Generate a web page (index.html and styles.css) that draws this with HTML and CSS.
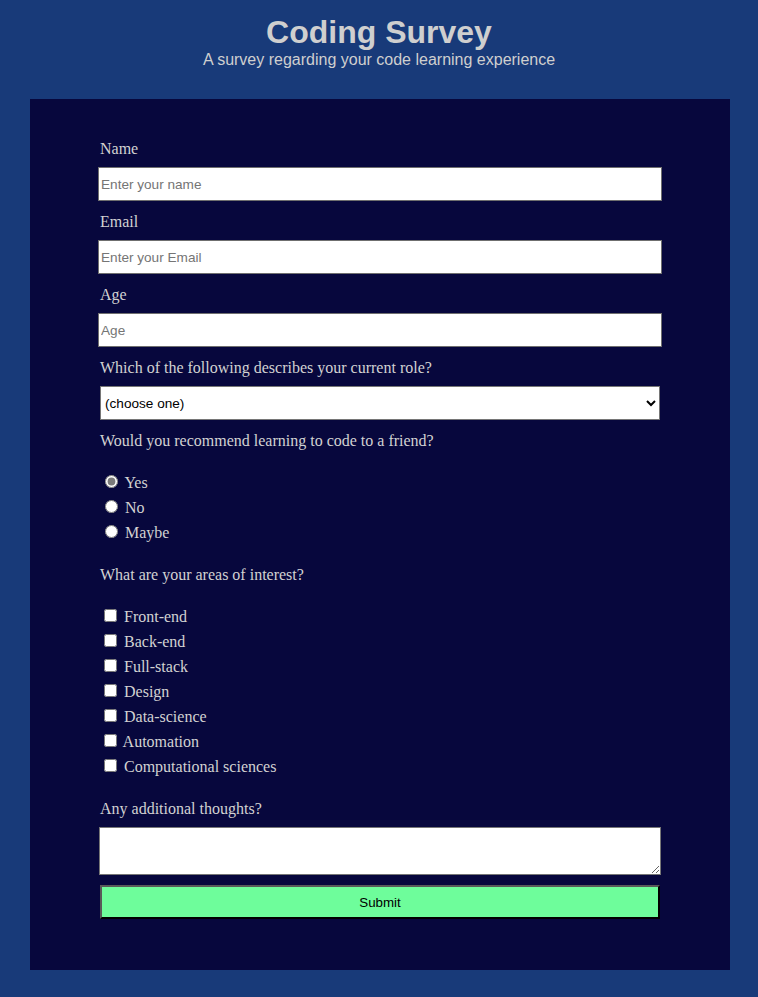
FILE: index.html
```html
<!DOCTYPE html>
<html lang="en">
<head>
<meta charset="utf-8">
<title>Coding Survey</title>
<link rel="stylesheet" href="styles.css">
</head>
<body>
<header class="header">
  <h1 class="title">Coding Survey</h1>
  <p class="subtitle">A survey regarding your code learning experience</p>
</header>
<main class="card">
  <form class="survey">
    <div class="group">
      <label class="field-label" for="name">Name</label>
      <input class="text-input" id="name" type="text" placeholder="Enter your name">
    </div>
    <div class="group">
      <label class="field-label" for="email">Email</label>
      <input class="text-input" id="email" type="email" placeholder="Enter your Email">
    </div>
    <div class="group">
      <label class="field-label" for="age">Age</label>
      <input class="text-input" id="age" type="number" placeholder="Age">
    </div>
    <div class="group">
      <label class="field-label" for="role">Which of the following describes your current role?</label>
      <select class="select" id="role">
        <option>(choose one)</option>
        <option>Student</option>
        <option>Full-time job</option>
        <option>Other</option>
      </select>
    </div>
    <div class="group">
      <p class="field-label">Would you recommend learning to code to a friend?</p>
      <div class="options">
        <label class="option"><input class="radio" type="radio" name="rec" checked> Yes</label>
        <label class="option"><input class="radio" type="radio" name="rec"> No</label>
        <label class="option"><input class="radio" type="radio" name="rec"> Maybe</label>
      </div>
    </div>
    <div class="group">
      <p class="field-label">What are your areas of interest?</p>
      <div class="options">
        <label class="option"><input class="check" type="checkbox"> Front-end</label>
        <label class="option"><input class="check" type="checkbox"> Back-end</label>
        <label class="option"><input class="check" type="checkbox"> Full-stack</label>
        <label class="option"><input class="check" type="checkbox"> Design</label>
        <label class="option"><input class="check" type="checkbox"> Data-science</label>
        <label class="option"><input class="check tight" type="checkbox"> Automation</label>
        <label class="option"><input class="check" type="checkbox"> Computational sciences</label>
      </div>
    </div>
    <div class="group last">
      <label class="field-label" for="thoughts">Any additional thoughts?</label>
      <textarea class="textarea" id="thoughts"></textarea>
    </div>
    <button class="submit" type="submit">Submit</button>
  </form>
</main>
</body>
</html>
```
FILE: styles.css
```css
html, body {
  margin: 0;
  padding: 0;
}
body {
  background: #183a79;
  color: #d2d2d2;
  font-family: "Liberation Serif", "Times New Roman", serif;
  font-size: 16px;
  padding-bottom: 27px;
}
.header {
  text-align: center;
  padding-top: 14px;
  margin-bottom: 30px;
  font-family: "Liberation Sans", Arial, sans-serif;
  color: #cfcfcf;
}
.title {
  margin: 0;
  font-size: 32px;
  line-height: 37px;
  font-weight: bold;
}
.subtitle {
  margin: 0;
  font-size: 16px;
  line-height: 18px;
}
.card {
  display: block;
  margin: 0 28px 0 30px;
  background: #07073d;
  padding: 40px 70px 51px;
}
.survey {
  display: flex;
  flex-direction: column;
}
.group {
  margin-bottom: 11px;
}
.group.last {
  margin-bottom: 10px;
}
.field-label {
  display: block;
  margin: 0 0 9px;
  padding-top: 1px;
  line-height: 18px;
  color: #d2d2d2;
}
.text-input {
  display: block;
  box-sizing: border-box;
  height: 34px;
  width: calc(100% + 4px);
  margin: 0 -2px;
  padding: 1px 2px;
  border: 1px solid #6f6f6f;
  background: #fff;
  font-family: "Liberation Sans", Arial, sans-serif;
  font-size: 13.6px;
  color: #000;
}
.text-input::placeholder {
  color: #757575;
}
.select {
  display: block;
  box-sizing: border-box;
  width: 100%;
  height: 34px;
  border: 1px solid #767676;
  border-radius: 0;
  background: #fff;
  font-family: "Liberation Sans", Arial, sans-serif;
  font-size: 13.6px;
  color: #000;
  padding: 0;
}
.options {
  padding: 11px 0 9px;
}
.option {
  display: block;
  line-height: 25px;
  height: 25px;
  color: #d2d2d2;
}
.radio {
  margin: 3px 3px 0 5px;
  accent-color: #7a7a7a;
}
.check {
  margin: 3px 3px 3px 4px;
}
.check.tight {
  margin-right: 2.5px;
}
.textarea {
  display: block;
  box-sizing: border-box;
  width: calc(100% + 2px);
  margin: 0 -1px;
  height: 48px;
  border: 1px solid #767676;
  background: #fff;
  resize: vertical;
}
.submit {
  display: block;
  box-sizing: border-box;
  width: 100%;
  height: 34px;
  background: #6efd9b;
  border-style: solid;
  border-width: 2px;
  border-color: #595959 #000 #000 #595959;
  font-family: "Liberation Sans", Arial, sans-serif;
  font-size: 13.33px;
  color: #000;
  padding: 0;
}
```
